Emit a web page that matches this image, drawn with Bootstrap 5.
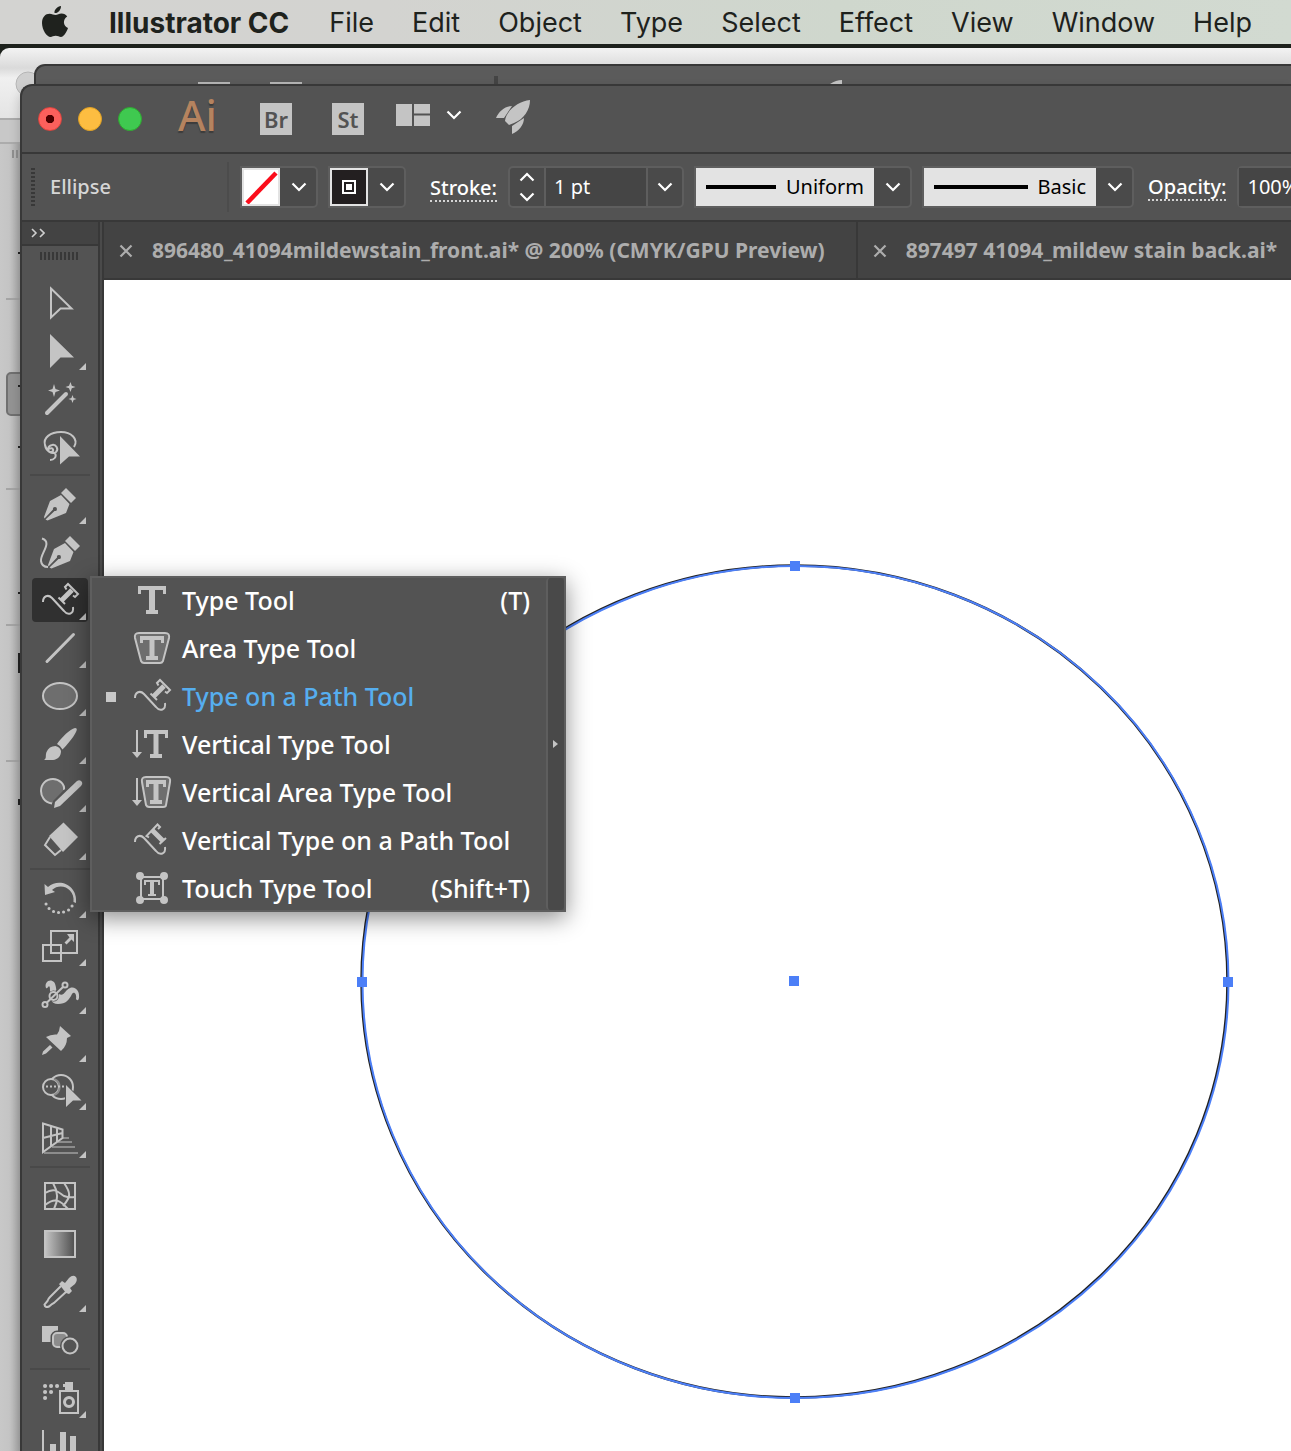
<!DOCTYPE html>
<html lang="en">
<head>
<meta charset="utf-8">
<meta name="viewport" content="width=device-width, initial-scale=1">
<title>Illustrator CC</title>
<link href="https://cdn.jsdelivr.net/npm/bootstrap@5.3.0/dist/css/bootstrap.min.css" rel="stylesheet">
<style>
:root{--ui:#535353;--edge:#383838;--line:#5e5e5e;--ico:#c4c4c4;--field:#454545}
body{font-family:"Noto Sans","Open Sans",sans-serif;background:#1d211c;overflow:hidden}
button{font-family:inherit}
.osbar{height:44px;background:linear-gradient(90deg,#d3d3d1,#d3d3d0 30%,#cfd7cd 65%,#d2dad1);font-family:Inter,Roboto,sans-serif;font-size:27px;line-height:46px;gap:38px;padding-left:41px;white-space:nowrap}
.osbar a{color:#1e221d;text-decoration:none}
.osbar .appname{font-weight:700;font-size:28px;margin-right:2px}
.desk{margin-top:4px;min-height:0}
.win-back{left:0;right:0;top:0;bottom:0;border-radius:9px 0 0 0;background:linear-gradient(#f3f3f3,#dadada 20px,#f0f0f0 30px,#e4e4e4 70px);overflow:hidden}
.win-mid{left:34px;right:0;top:16px;height:60px;border-top:2px solid var(--edge);border-left:2px solid var(--edge);border-radius:11px 0 0 0;background:#5b5b5b;overflow:hidden}
.win-front{left:20px;right:0;top:36px;bottom:0;border-top:2px solid var(--edge);border-left:2px solid var(--edge);border-radius:12px 0 0 0;background:var(--ui);box-shadow:0 6px 12px rgba(0,0,0,.2)}
.titlebar{height:68px;border-bottom:2px solid var(--edge);padding-left:16px}
.lamp{width:24px;height:24px;border-radius:50%;border:1px solid;padding:0}
.lamp-r{background:radial-gradient(circle,#4d0000 0 4px,#fc605c 4.5px);border-color:#e0443e}
.lamp-y{background:#fdbd41;border-color:#dfa023}
.lamp-g{background:#3fc950;border-color:#2fa830}
.ailogo{color:#b5835f;font-size:42px;line-height:60px;font-weight:500;text-shadow:0 2px 1px #3c3c3c;margin-left:36px;padding-bottom:8px;width:42px}
.appchip{width:32px;height:32px;background:var(--ico);color:var(--ui);border:0;padding:0;font-size:22px;line-height:32px;font-weight:600;margin-left:40px}
.plainbtn{background:none;border:0;padding:0;display:flex;align-items:center;color:#fff}
.ctrlbar{height:68px;border-bottom:2px solid var(--edge);color:#fff;font-size:20px;line-height:28px;padding-left:9px;white-space:nowrap;overflow:hidden}
.ctrlbar>*{flex-shrink:0}
.grip-v{width:4px;height:38px;background:repeating-linear-gradient(var(--edge) 0 2px,transparent 2px 4px)}
.objname{margin-left:15px;width:177px;color:#d6d6d6;font-weight:500}
.vsep{width:2px;height:50px;background:#4c4c4c;margin-right:11px}
.grp{height:42px;border:2px solid var(--line);border-radius:5px;background:#4a4a4a;display:flex;align-items:stretch;flex:none}
.grp.square{border-radius:0 5px 5px 0}
.grp+.grp{margin-left:10px}
.chev{width:34px;border:0;padding:0;background:none;display:flex;align-items:center;justify-content:center}
.swatch{width:38px;height:38px;border:2px solid #e3e3e3;padding:0;margin-right:2px;display:flex}
.spin{width:34px;display:flex;flex-direction:column;justify-content:space-between;align-items:center;padding:4px 0}
.spin button{border:0;background:none;padding:0;line-height:0}
.spin .up svg{transform:rotate(180deg)}
.numbox{border:0;border-left:2px solid var(--line);border-right:2px solid var(--line);background:var(--field);color:#fff;width:104px;padding:0 0 0 8px;font-size:20px;border-radius:0}
.dots{border-bottom:2px dotted #d4d4d4;line-height:24px;font-weight:500}
.dots-stroke{margin:4px 11px 0 24px}
.dots-opacity{margin:2px 11px 0 14px}
.pick{background:#e3e3e3;display:flex;align-items:center;padding:0 10px;margin-right:2px}
.pick select{appearance:none;border:0;background:none;padding:0;color:#000;font-size:20px;text-align:right;text-align-last:right;flex:1;min-width:0}
.pick i{height:4px;background:#000}
.pick-width{width:178px}.pick-width i{width:70px}
.pick-brush{width:172px}.pick-brush i{width:94px}
.work{flex:1;min-height:0}
.docs{min-width:0}
.toolbox{width:82px;flex:none;border-right:2px solid var(--edge);background:linear-gradient(90deg,var(--ui) 76px,var(--edge) 76px 78px,#4a4a4a 78px)}
.toolhead{width:76px;height:24px;background:#434343;border-bottom:2px solid var(--edge);padding-left:9px}
.toolgrip{height:33px;padding:6px 18px}
.toolgrip div{width:38px;height:8px;background:repeating-linear-gradient(90deg,var(--edge) 0 2px,transparent 2px 4px)}
.tool{display:block;width:56px;height:48px;margin-left:10px;border:0;padding:0;background:none}
.tool svg,.flyrow svg,.win-back svg,.win-mid svg{display:block}
.toolsep{width:60px;height:10px;margin-left:8px;padding-top:3px}
.toolsep div{height:2px;background:#494949}
.tabs{height:58px;background:#434343;border-bottom:2px solid var(--edge);color:#adadad;font-weight:700;font-size:21px;white-space:nowrap;overflow:hidden}
.doctab{border-right:2px solid var(--edge);padding:2px 31px 0 15px;gap:19px;flex:none}
.doctab a{color:inherit;text-decoration:none}
.canvas{background:#fff;flex:1;overflow:hidden}
.art{left:250px;top:278px}
.flyout{left:68px;top:490px;width:476px;padding:0 2px;background:var(--ui);box-shadow:inset 0 0 0 2px var(--line),0 6px 22px rgba(0,0,0,.45);z-index:5}
.flyrow{display:flex;align-items:center;width:100%;height:48px;border:0;background:none;padding:2px 16px 0 38px;color:#fff;font-size:25px;line-height:44px;font-weight:500;text-align:left;position:relative}
.flyrow svg{flex:none}
.flyrow span{margin-left:8px;padding-bottom:2px}
.flyrow kbd{margin-left:auto;background:none;color:inherit;padding:0 0 2px;font:inherit}
.flyrow.on{color:#56aeef}
.flyrow.on::before{content:"";position:absolute;left:14px;top:20px;width:10px;height:10px;background:#c8c8c8}
.tear{width:18px;border:0;border-left:2px solid var(--line);border-radius:4px;background:#494949;padding:0;margin:2px 0;display:flex;align-items:center;justify-content:center}
.i{fill:none;stroke:var(--ico);stroke-width:2}
.w3{stroke-width:3}.w4{stroke-width:4}.w5{stroke-width:5}.w6{stroke-width:6}
.dim{fill:#6e6e6e}.mid{fill:#8c8c8c}.own{fill:var(--ui)}
.f{fill:var(--ico);stroke:none}
</style>
</head>
<body class="vh-100 d-flex flex-column">
<svg width="0" height="0" class="position-absolute" aria-hidden="true">
<defs>
<symbol id="chev" viewBox="0 0 16 10"><path d="M1.500 1.500L8 8L14.500 1.500" fill="none" stroke="#fff" stroke-width="2.200"/></symbol>
<linearGradient id="gg"><stop stop-color="#c4c4c4"/><stop offset="1" stop-color="#4e4e4e"/></linearGradient>
<g id="tri"><path class="f" d="M86 12V19H79Z"/></g>
<g id="nib"><path class="f" d="M61-10L69.500-1L66 8L47.500 15.500L45.500 14.500L54.500 6A2 2 0 1 0 53 4.500L44.500 13.500L44 12L50-4Z"/><path class="f" d="M66-17L76-7L71-2L61-12Z"/></g>
<g id="wave"><path class="i" d="M43 1C43-5 48-7 52-3L64 10C68 15 74 13 73 6"/></g>
<g id="pathtype"><use href="#wave"/><path class="i" d="M66.500-11.500L65-14L68-17L78-7L75-4L73-5.500"/><path class="i w5" d="M72-11L61.500-.500"/><path class="i" d="M58.500-3.500L65 3"/></g>
</defs>
</svg>

<nav class="osbar d-flex flex-shrink-0" aria-label="Application menu">
<a href="#" aria-label="Apple menu"><svg width="30" height="44" viewBox="0 1 30 44"><path fill="#1f221e" d="M20 4C20 8 17 11.500 13.500 11C13 7.500 16.500 4.500 20 4ZM14.500 13C16.500 13 18 11.500 20.500 11.500C23 11.500 25 12.700 26.200 14.500C21.500 17.500 22 24 27 26C25.500 30.500 22.500 35 20 35C18 35 17.200 33.800 14.700 33.800C12.200 33.800 11.300 35 9.500 35C6 35 1 28 1 21C1 15 4.500 11.700 8.500 11.700C11 11.700 12.800 13 14.500 13Z"/></svg></a>
<a href="#" class="appname">Illustrator CC</a><a href="#">File</a><a href="#">Edit</a><a href="#">Object</a><a href="#">Type</a><a href="#">Select</a><a href="#">Effect</a><a href="#">View</a><a href="#">Window</a><a href="#">Help</a>
</nav>

<main class="desk position-relative flex-grow-1">
<div class="win-back position-absolute">
<svg width="40" height="1403" viewBox="0 48 40 1403" aria-hidden="true"><defs><linearGradient id="sh"><stop offset="0" stop-color="#c8c8c8"/><stop offset=".5" stop-color="#c4c4c4"/><stop offset="1" stop-color="#a8a8a8"/></linearGradient></defs>
<circle cx="28" cy="84" r="12" fill="#cfcfcf" stroke="#b5b5b5"/><path d="M0 119H20V143H0Z" fill="#c8c8c8"/><path d="M0 144H20V1451H0Z" fill="url(#sh)"/><path d="M0 119H20M0 143H20" stroke="#acacac" stroke-width="2"/><path d="M13 150V158M17 150V158" stroke="#909090" stroke-width="2"/><path d="M6 299H20M6 489H20M6 625H20M6 761H20" stroke="#a4a4a4" stroke-width="2"/><rect x="7" y="373" width="24" height="42" rx="4" fill="#949494" stroke="#707070" stroke-width="2"/><path d="M19 252v2M18 386h2M19 446v2M19 592v2M19 653v20M19 799v6" stroke="#222" stroke-width="2"/></svg>
</div>
<div class="win-mid position-absolute"><svg width="1255" height="20" viewBox="36 66 1255 20" aria-hidden="true"><path d="M198 83H230M270 83H302" stroke="#b5b5b5" stroke-width="2"/><path d="M496 76V86" stroke="#444" stroke-width="4"/><path d="M830 84Q836 80 842 80V84Z" fill="#c4c4c4"/></svg></div>

<section class="win-front position-absolute d-flex flex-column">
<header class="titlebar d-flex align-items-center flex-shrink-0">
<div class="d-flex gap-3"><button class="lamp lamp-r" aria-label="Close"></button><button class="lamp lamp-y" aria-label="Minimize"></button><button class="lamp lamp-g" aria-label="Zoom"></button></div>
<div class="ailogo">Ai</div>
<button class="appchip">Br</button>
<button class="appchip">St</button>
<button class="plainbtn ms-4 gap-2 pb-2" aria-label="Arrange documents"><svg width="50" height="30" viewBox="388 100 50 30"><path class="f" d="M396 104H412V126H396ZM414 104H430V113.500H414ZM414 115.500H430V126H414Z"/></svg><svg width="16" height="10"><use href="#chev"/></svg></button>
<button class="plainbtn ms-4 pb-1" aria-label="GPU performance"><svg width="50" height="40" viewBox="486 97 50 40"><path class="f" d="M530 100C530 110 524 119 514 123L509 125L505 121C506 111 518 101 530 100ZM496 118C499 111 505 106 512 106L504 118ZM512 126L524 118C524 125 519 131 512 134Z"/></svg></button>
</header>

<div class="ctrlbar d-flex align-items-center flex-shrink-0">
<div class="grip-v"></div><div class="objname">Ellipse</div><div class="vsep"></div>
<div class="grp square"><button class="swatch bg-white" aria-label="Fill: none"><svg width="34" height="34"><path d="M3 33L32 3" stroke="#fb0d1b" stroke-width="4.500"/></svg></button><button class="chev" aria-label="Fill options"><svg width="16" height="10"><use href="#chev"/></svg></button></div>
<div class="grp square"><button class="swatch" aria-label="Stroke colour"><svg width="34" height="34"><path fill="#231f20" d="M0 0H34V34H0Z"/><path d="M11 11H23V23H11Z" fill="none" stroke="#fff" stroke-width="2"/><path fill="#fff" d="M14 14H20V20H14Z"/></svg></button><button class="chev" aria-label="Stroke colour options"><svg width="16" height="10"><use href="#chev"/></svg></button></div>
<label class="dots dots-stroke" for="sw">Stroke:</label>
<div class="grp"><div class="spin"><button class="up" aria-label="Increase"><svg width="16" height="10"><use href="#chev"/></svg></button><button aria-label="Decrease"><svg width="16" height="10"><use href="#chev"/></svg></button></div><input class="numbox" id="sw" value="1 pt"><button class="chev" aria-label="Stroke weights"><svg width="16" height="10"><use href="#chev"/></svg></button></div>
<div class="grp square"><div class="pick pick-width"><i></i><select aria-label="Width profile"><option>Uniform</option></select></div><button class="chev" aria-label="Width profiles"><svg width="16" height="10"><use href="#chev"/></svg></button></div>
<div class="grp square"><div class="pick pick-brush"><i></i><select aria-label="Brush"><option>Basic</option></select></div><button class="chev" aria-label="Brushes"><svg width="16" height="10"><use href="#chev"/></svg></button></div>
<label class="dots dots-opacity" for="op">Opacity:</label>
<div class="grp"><input class="numbox border-0" id="op" value="100%"></div>
</div>

<div class="work d-flex">
<aside class="toolbox" aria-label="Tools">
<div class="toolhead d-flex align-items-center"><svg width="14" height="10"><path d="M1 1L5 5L1 9M9 1L13 5L9 9" fill="none" stroke="#cfcfcf" stroke-width="1.600"/></svg></div>
<div class="toolgrip"><div></div></div>
<button class="tool" aria-label="Selection"><svg width="56" height="48" viewBox="32 -24 56 48"><path class="i" d="M51-14.500L71.500 5.500H60.500L51 14.500Z"/></svg></button>
<button class="tool" aria-label="Direct selection"><svg width="56" height="48" viewBox="32 -24 56 48"><path class="f" d="M50-17L74 6.500H60.500L50 17Z"/><use href="#tri"/></svg></button>
<button class="tool" aria-label="Magic wand"><svg width="56" height="48" viewBox="32 -24 56 48"><path class="i w4" stroke-linecap="round" d="M47 14L66-5"/><path class="f" d="M54-15L55.500-10L60-8.500L55.500-7L54-2L52.500-7L48-8.500L52.500-10ZM70.500-17L71.800-13.300L75.500-12L71.800-10.700L70.500-7L69-10.700L65.500-12L69-13.300ZM72.500-4L73.600-1.100L76.500 0L73.600 1.100L72.500 4L71.400 1.100L68.500 0L71.400-1.100Z"/></svg></button>
<button class="tool" aria-label="Lasso"><svg width="56" height="48" viewBox="32 -24 56 48"><path class="i" d="M74 0C79-8 71-15 61-15C50-15 43-9 45-2C46 4 52 8 56 5C59 2 56-3 52-2C47-1 47 5 51 5C55 5 53-1 49 2M55 6C57 10 54 13 50 13"/><path class="f" d="M60-11L80 9.500H69L60 17.500Z"/></svg></button>
<div class="toolsep"><div></div></div>
<button class="tool" aria-label="Pen"><svg width="56" height="48" viewBox="32 -24 56 48"><use href="#nib"/><use href="#tri"/></svg></button>
<button class="tool" aria-label="Curvature"><svg width="56" height="48" viewBox="32 -24 56 48"><use href="#nib" x="4"/><path class="i" d="M42-14.500C53-11 40 1 41 8C41.500 12 44 14 48 14"/></svg></button>
<button class="tool" aria-label="Type on a path" aria-expanded="true"><svg width="56" height="48" viewBox="32 -24 56 48"><rect x="32" y="-23" width="56" height="44" rx="4" fill="#303030"/><use href="#pathtype"/><use href="#tri"/></svg></button>
<button class="tool" aria-label="Line segment"><svg width="56" height="48" viewBox="32 -24 56 48"><path class="i w3" stroke-linecap="round" d="M47 12.500L73.500-14.500"/><use href="#tri"/></svg></button>
<button class="tool" aria-label="Ellipse"><svg width="56" height="48" viewBox="32 -24 56 48"><ellipse class="i dim" cx="60" cy="-1" rx="17" ry="13"/><use href="#tri"/></svg></button>
<button class="tool" aria-label="Paintbrush"><svg width="56" height="48" viewBox="32 -24 56 48"><path class="f" d="M57-1C62-8 70-16 75-17Q78-17 76-13C73-7 67 0 62.500 4.500Q61 1 57-1ZM55.500 1Q60 2 61 6C61 11 58 14.500 53 15H44C47 13 45 11 46.500 7Q49 1 55.500 1Z"/><use href="#tri"/></svg></button>
<button class="tool" aria-label="Blob brush"><svg width="56" height="48" viewBox="32 -24 56 48"><path class="i dim" d="M52 10.500C44 9 41 3 41-2C41-9 46-14 53-14C59-14 65-9 64-3"/><path class="own" d="M53 14V8L66-5L69 0L56 14Z"/><path class="f" d="M54 15L55 9L77-12Q80-14 82-11Q83-9 81-7L60 13Z"/><use href="#tri"/></svg></button>
<button class="tool" aria-label="Eraser"><svg width="56" height="48" viewBox="32 -24 56 48"><path class="f" d="M63.500-18.500L78-4L63 11L49-5Z"/><path class="i" d="M50-4L45 4L55 14L61 9"/><use href="#tri"/></svg></button>
<div class="toolsep"><div></div></div>
<button class="tool" aria-label="Rotate"><svg width="56" height="48" viewBox="32 -24 56 48"><path class="f" d="M44.500-15L48-12C60-22 78-13 76 4L73.500 3C75-10 61-17 52-9L55-7L45-4Z"/><path d="M46 5h.1M49 9.500h.1M53.500 12.500h.1M58.500 13.500h.1M63.500 13h.1M68.500 11h.1M72 7h.1" class="i w3" stroke-linecap="round"/><use href="#tri"/></svg></button>
<button class="tool" aria-label="Scale"><svg width="56" height="48" viewBox="32 -24 56 48"><path class="i" d="M51-16H77V6H51ZM43-2H61V14H43Z"/><path class="f" d="M74-13V-5L71.500-7.500L66.500-2.500L64.500-4.500L69.500-9.500L67-13Z"/><use href="#tri"/></svg></button>
<button class="tool" aria-label="Warp"><svg width="56" height="48" viewBox="32 -24 56 48"><path class="f" d="M46-7C44-13 50-17 54-13C57-9 55-4 59-1C64 2 65-5 70-7C76-9 80-3 79 3Q78 7 76 4C77-1 74-4 72-1C69 5 66 9 58 9C51 9 49 3 50-3C50-7 50-10 48-8Q47-6 46-7Z"/><path stroke="#535353" stroke-width="5" d="M47 7.500L63-8"/><circle class="own" cx="53.500" cy="1" r="5.500"/><path class="i" d="M47 7.500L63-8"/><circle class="i" cx="53.500" cy="1" r="4"/><circle class="i own" cx="45" cy="9.500" r="2.500"/><circle class="i own" cx="65" cy="-10" r="2.500"/><use href="#tri"/></svg></button>
<button class="tool" aria-label="Puppet warp"><svg width="56" height="48" viewBox="32 -24 56 48"><path class="f" d="M60-17L71-7L67-5Q67 3 61 8L46-6Q51-9 57-8.500L59-12ZM50 2L52.500 4.500L46 10.500L42 12L43 8.500Z"/><use href="#tri"/></svg></button>
<button class="tool" aria-label="Shape builder"><svg width="56" height="48" viewBox="32 -24 56 48"><circle class="i" cx="61" cy="-4" r="12"/><circle class="i own" cx="51" cy="-4" r="8"/><path d="M54-12A8.500 8.500 0 0 1 54 4" fill="none" stroke="#8a8a8a" stroke-width="2"/><path class="i" stroke-dasharray="2 2" d="M46-4.500H66"/><path class="own" d="M65-8V18L72 11H84Z"/><path class="f" d="M66-6L81.500 9.500H73L66 16Z"/><use href="#tri"/></svg></button>
<button class="tool" aria-label="Perspective grid"><svg width="56" height="48" viewBox="32 -24 56 48"><path d="M62-1H69M58 3H72M52 8H75M44 14H78" stroke="#8c8c8c" stroke-width="2"/><path class="i" d="M43-15.500L62.500-9.500V-1L43 13ZM51-13V7M57-11V3M43-1L62.500-6"/><use href="#tri"/></svg></button>
<div class="toolsep"><div></div></div>
<button class="tool" aria-label="Mesh"><svg width="56" height="48" viewBox="32 -24 56 48"><path class="i" d="M45-14H75V12H45Z"/><path class="i" d="M45-4C55-10 58-5 64-1Q69 1 75 0M45 8C55 0 60 3 68 12M53-14C59-4 58 4 54 12M64-14C71-4 71 0 63 9"/></svg></button>
<button class="tool" aria-label="Gradient"><svg width="56" height="48" viewBox="32 -24 56 48"><path fill="url(#gg)" d="M45-14H75V12H45Z"/><path class="i" d="M45-14H75V12H45Z"/></svg></button>
<button class="tool" aria-label="Eyedropper"><svg width="56" height="48" viewBox="32 -24 56 48"><path class="i" d="M61-7L50 4Q48 6 47.500 8L44.500 11.500Q45 15 49 13.500L52 11L54 10L67-2"/><path class="f" d="M59-9L62-12L65-10L69-15Q73-19 76-16Q78-13 75-9L70-5L72-2L69 1L66 0Z"/><use href="#tri"/></svg></button>
<button class="tool" aria-label="Blend"><svg width="56" height="48" viewBox="32 -24 56 48"><path class="f" d="M42-15H58V1H42Z"/><rect x="53" y="-8" width="14" height="14" rx="4" stroke="#535353" stroke-width="5"/><rect x="53" y="-8" width="14" height="14" rx="4" class="i mid"/><circle class="own" cx="70" cy="5" r="10"/><circle class="i" cx="70" cy="5" r="7.500"/></svg></button>
<div class="toolsep"><div></div></div>
<button class="tool" aria-label="Symbol sprayer"><svg width="56" height="48" viewBox="32 -24 56 48"><path class="i w4" stroke-linecap="round" d="M45-13h.1M51-13h.1M57-13h.1M45-7h.1M51-7h.1M45-1h.1"/><path class="i" d="M60-8H78V14H60Z"/><path class="f" d="M65-17H73V-9H65V-12H63V-15H65Z"/><circle class="i w3" cx="69" cy="3" r="4.500"/><use href="#tri"/></svg></button>
<button class="tool" aria-label="Column graph"><svg width="56" height="48" viewBox="32 -24 56 48"><path class="f" d="M42-17H44V14H42ZM50-3H56V14H50ZM60-15H66V14H60ZM70-11H76V14H70Z"/></svg></button>
</aside>

<div class="docs flex-grow-1 d-flex flex-column">
<div class="tabs d-flex flex-shrink-0">
<div class="doctab d-flex align-items-center"><button class="plainbtn" aria-label="Close tab"><svg width="14" height="14"><path d="M1.500 1.500L12.500 12.500M12.500 1.500L1.500 12.500" stroke="#adadad" stroke-width="2.200"/></svg></button><a href="#">896480_41094mildewstain_front.ai* @ 200% (CMYK/GPU Preview)</a></div>
<div class="doctab d-flex align-items-center"><button class="plainbtn" aria-label="Close tab"><svg width="14" height="14"><path d="M1.500 1.500L12.500 12.500M12.500 1.500L1.500 12.500" stroke="#adadad" stroke-width="2.200"/></svg></button><a href="#">897497 41094_mildew stain back.ai*</a></div>
</div>
<div class="canvas position-relative">
<svg class="art position-absolute" width="884" height="850" viewBox="354 558 884 850" aria-label="Selected ellipse"><ellipse cx="794.500" cy="981.500" rx="433" ry="416" fill="none" stroke="#222" stroke-width="2.500"/><ellipse cx="795.500" cy="982" rx="433" ry="416" fill="none" stroke="#4c7ff7" stroke-width="2"/><path fill="#4c7ff7" d="M790 561h10v10h-10zM357 977h10v10h-10zM1223 977h10v10h-10zM790 1393h10v10h-10zM789 976h10v10h-10z"/></svg>
</div>
</div>
</div>

<div class="flyout position-absolute d-flex" role="menu">
<div class="flex-grow-1">
<button class="flyrow" role="menuitem"><svg width="44" height="48" viewBox="130 -24 44 48"><path class="i w4" d="M138-13H166M146 11H158"/><path class="i w6" d="M152-13V11"/><path class="i w3" d="M139.500-13V-7M164.500-13V-7"/></svg><span>Type Tool</span><kbd>(T)</kbd></button>
<button class="flyrow" role="menuitem"><svg width="44" height="48" viewBox="130 -24 44 48"><path class="i dim" d="M139-16H165Q170-16 169-11L163 12Q162 14 160 14H144Q142 14 141 12L135-11Q134-16 139-16Z"/><path class="i w4" d="M140-11H164M146 9H158"/><path class="i w5" d="M152-11V9"/><path class="i w3" d="M141.500-11V-6M162.500-11V-6"/></svg><span>Area Type Tool</span></button>
<button class="flyrow on" role="menuitem"><svg width="44" height="48" viewBox="130 -24 44 48"><use href="#pathtype" x="92"/></svg><span>Type on a Path Tool</span></button>
<button class="flyrow" role="menuitem"><svg width="44" height="48" viewBox="130 -24 44 48"><path class="i" d="M137-15V9"/><path class="f" d="M132 7H142L137 13Z"/><path class="i w4" d="M144-13H168M150 11H162"/><path class="i w5" d="M156-13V11"/><path class="i w3" d="M145.500-13V-7M166.500-13V-7"/></svg><span>Vertical Type Tool</span></button>
<button class="flyrow" role="menuitem"><svg width="44" height="48" viewBox="130 -24 44 48"><path class="i" d="M137-15V9"/><path class="f" d="M132 7H142L137 13Z"/><path class="i dim" d="M146-16H166Q171-16 170-11L166 12Q166 14 163 14H149Q147 14 146 12L142-11Q141-16 146-16Z"/><path class="i w4" d="M146-11H166M150 9H162"/><path class="i w5" d="M156-11V9"/><path class="i w3" d="M147.500-11V-6M164.500-11V-6"/></svg><span>Vertical Area Type Tool</span></button>
<button class="flyrow" role="menuitem"><svg width="44" height="48" viewBox="130 -24 44 48"><use href="#wave" x="92"/><path class="i" d="M149-3.500L146.500-5L157.500-16.500L160-14L158-12M159.500 3L166-3"/><path class="i w5" d="M152-11L163 0"/></svg><span>Vertical Type on a Path Tool</span></button>
<button class="flyrow" role="menuitem"><svg width="44" height="48" viewBox="130 -24 44 48"><path class="i" d="M141-12H163V10H141Z"/><path class="f" d="M136-13a4 4 0 1 0 8 0a4 4 0 1 0-8 0M160-13a4 4 0 1 0 8 0a4 4 0 1 0-8 0M136 11a4 4 0 1 0 8 0a4 4 0 1 0-8 0M160 11a4 4 0 1 0 8 0a4 4 0 1 0-8 0"/><path class="i" d="M145-4V-8H159V-4M148 6H156"/><path class="i w4" d="M152-8V6"/></svg><span>Touch Type Tool</span><kbd>(Shift+T)</kbd></button>
</div>
<button class="tear" aria-label="Tear off"><svg width="6" height="8"><path class="f" d="M0 0L5 4L0 8Z"/></svg></button>
</div>
</section>
</main>
<script src="https://cdn.jsdelivr.net/npm/bootstrap@5.3.0/dist/js/bootstrap.bundle.min.js"></script>
</body>
</html>
